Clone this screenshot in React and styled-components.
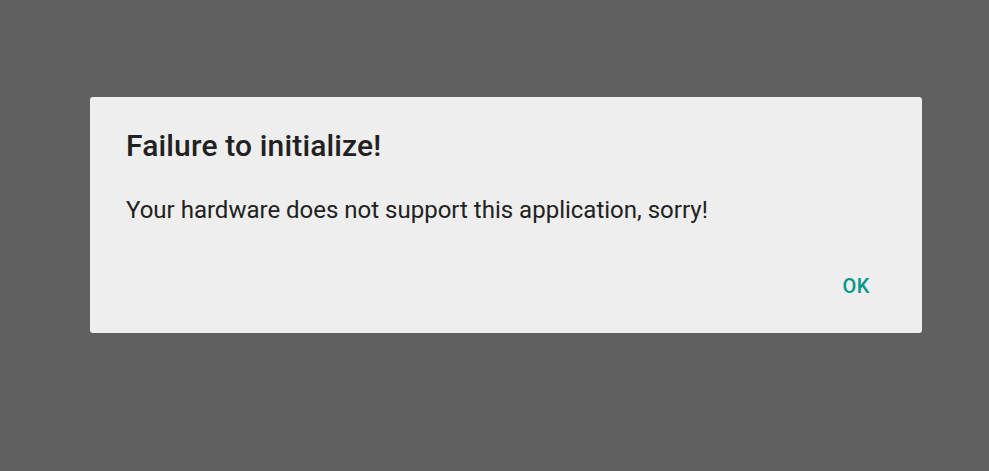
import React from 'react';
import styled, { createGlobalStyle } from 'styled-components';

const GlobalStyle = createGlobalStyle`
  html, body {
    margin: 0;
    padding: 0;
    background: #606060;
    font-family: Roboto, 'Liberation Sans', sans-serif;
  }
`;

const Screen = styled.div`
  width: 989px;
  height: 471px;
  background: #606060;
  box-sizing: border-box;
  padding: 97px 0 0 90px;
`;

const Dialog = styled.div`
  width: 832px;
  height: 236px;
  box-sizing: border-box;
  background: #eeeeee;
  border-radius: 3px;
  padding: 31px 36px 0 36px;
  display: flex;
  flex-direction: column;
`;

const Title = styled.h2`
  margin: 0;
  font-size: 30px;
  font-weight: 500;
  letter-spacing: 0.15px;
  color: #212121;
  line-height: 36px;
`;

const Message = styled.p`
  margin: 30px 0 0;
  font-size: 24px;
  font-weight: 400;
  color: #212121;
  line-height: 32px;
`;

const Actions = styled.div`
  display: flex;
  justify-content: flex-end;
  margin-top: 42px;
`;

const Button = styled.button`
  border: none;
  background: transparent;
  font-family: inherit;
  font-size: 20px;
  font-weight: 500;
  letter-spacing: 0.6px;
  color: #009688;
  padding: 0 16px;
  height: 36px;
  line-height: 36px;
  cursor: pointer;
`;

export default function App() {
  return (
    <>
      <GlobalStyle />
      <Screen>
        <Dialog>
          <Title>Failure to initialize!</Title>
          <Message>Your hardware does not support this application, sorry!</Message>
          <Actions>
            <Button>OK</Button>
          </Actions>
        </Dialog>
      </Screen>
    </>
  );
}
